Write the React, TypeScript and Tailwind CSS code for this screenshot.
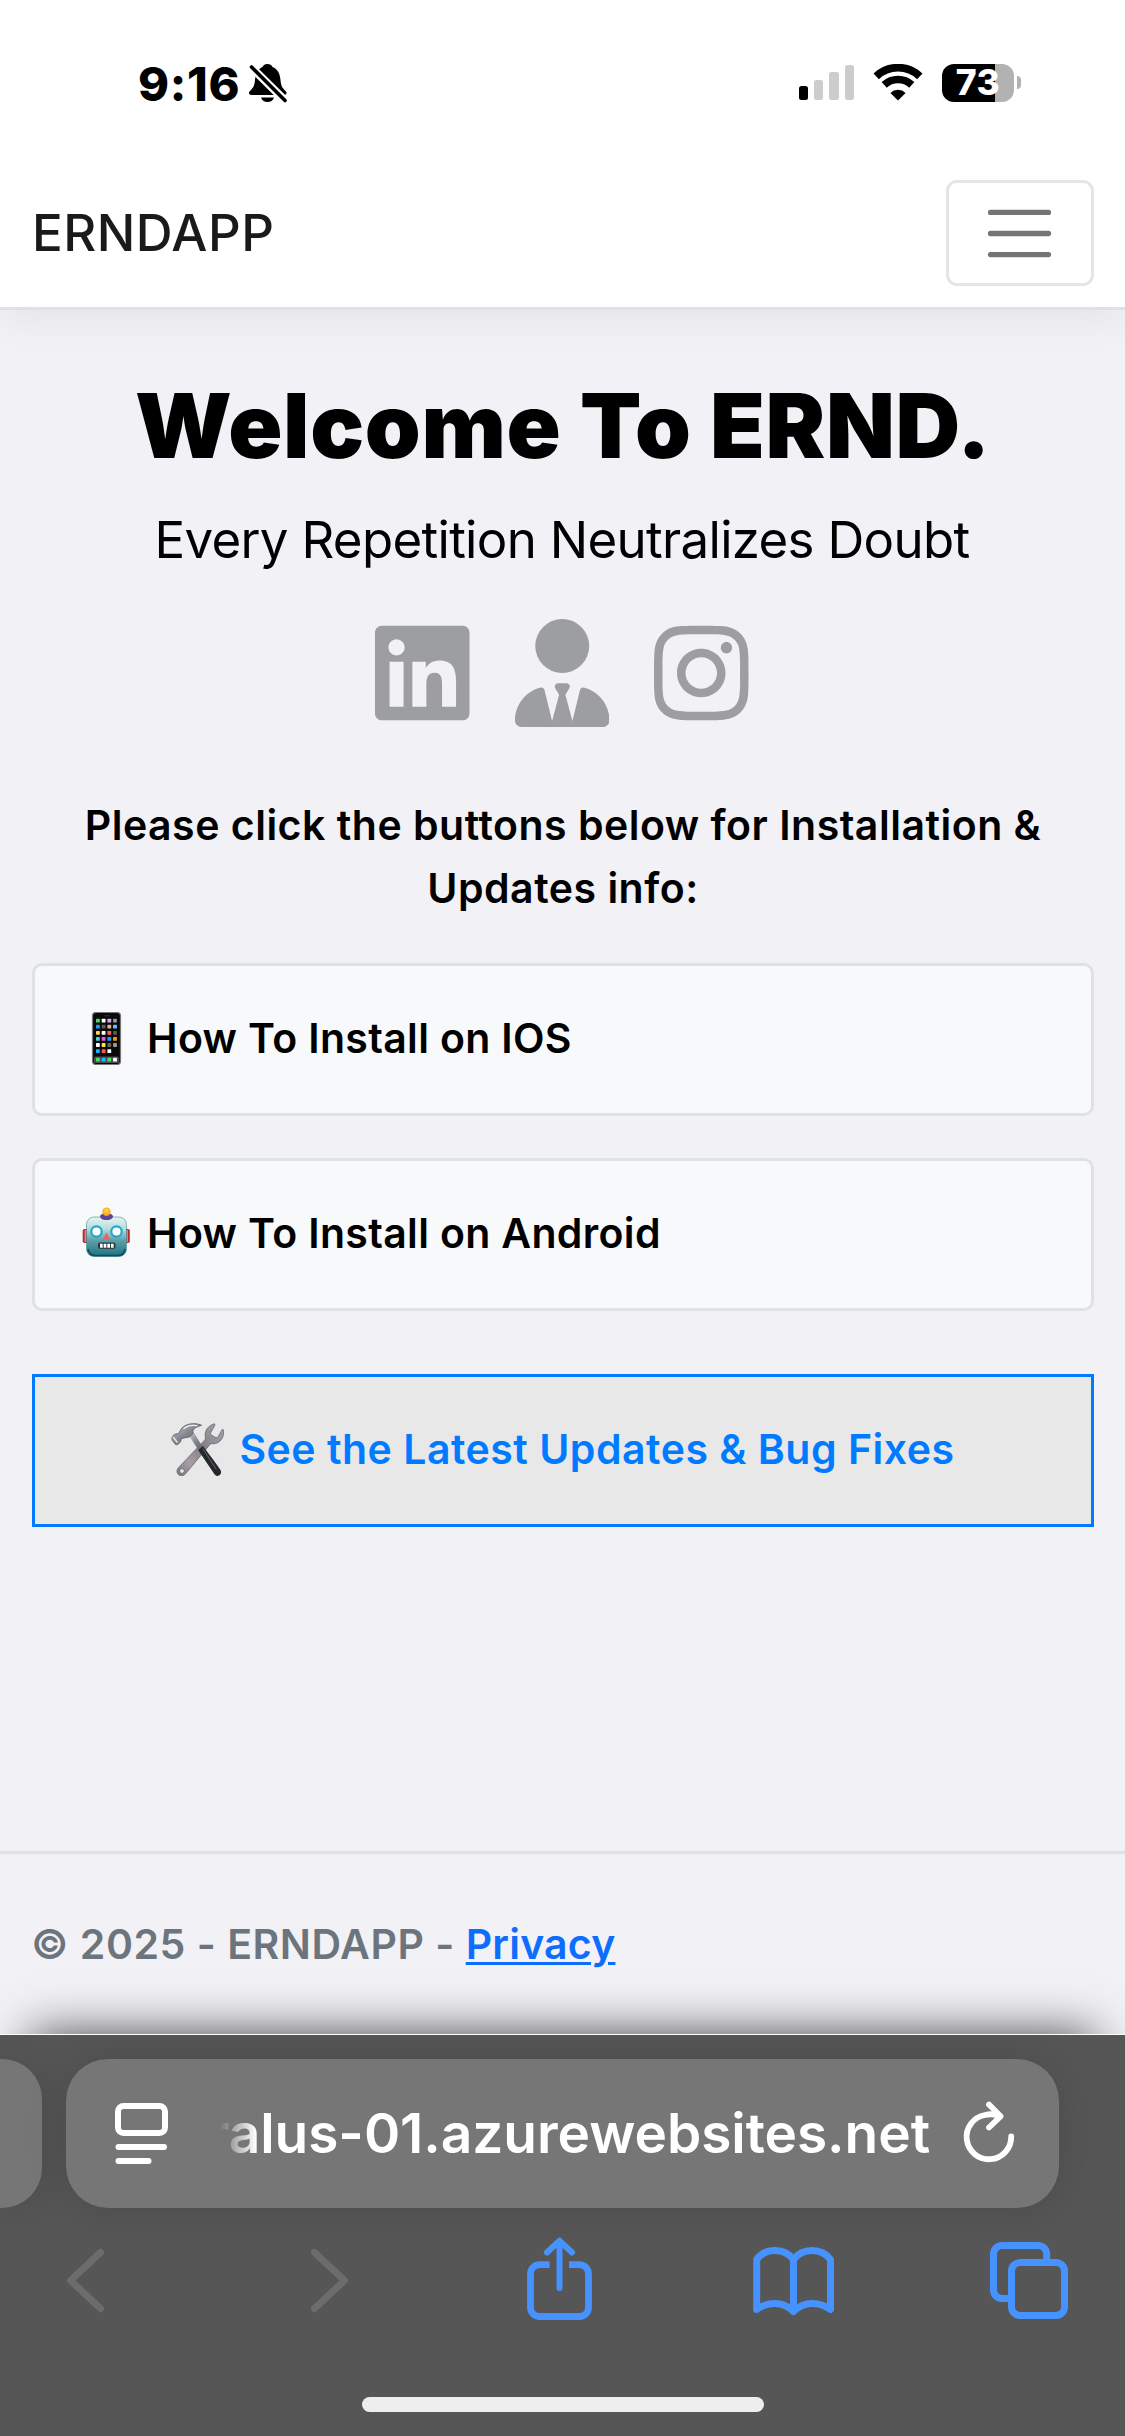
import React from "react";
import { FaInstagram, FaLinkedin, FaUserTie } from "react-icons/fa6";

function BellSlash() {
  return (
    <svg viewBox="249 63 38 40" className="h-[40px] w-[38px]">
      <path
        d="M267.5 64c2.5 0 4.200 1.300 5 3 5 2 7.500 6.500 8 13 .4 6 2 8 5 11 2 2 1 4-1.500 4H251.500c-2.500 0-3.500-2-1.500-4 3-3 4.600-5 5-11 .5-6.500 3-11 7.500-13 .8-1.700 2.500-3 5-3z"
        fill="#000"
      />
      <path d="M261 97.500h13c-.8 3-3.500 4.500-6.500 4.500s-5.700-1.500-6.500-4.500z" fill="#000" />
      <path d="M249 65l37.500 37" stroke="#fff" strokeWidth="8" />
      <path d="M251.500 67l33.500 33.500" stroke="#000" strokeWidth="3.600" strokeLinecap="round" />
    </svg>
  );
}

function Signal() {
  return (
    <div className="flex h-[35px] items-end gap-[6px]">
      <div className="h-[14px] w-[9px] rounded-[2.5px] bg-black" />
      <div className="h-[20px] w-[9px] rounded-[2.5px] bg-[#cccccc]" />
      <div className="h-[28px] w-[10px] rounded-[2.5px] bg-[#cccccc]" />
      <div className="h-[35px] w-[9px] rounded-[2.5px] bg-[#cccccc]" />
    </div>
  );
}

function Wifi() {
  return (
    <svg viewBox="0 0 50 37" className="h-[37px] w-[50px]" fill="none" stroke="#000">
      <path d="M3.200 12.300a31.800 31.800 0 0 1 43.600 0" strokeWidth="7.800" />
      <path d="M11.200 20.900a20.300 20.300 0 0 1 27.600 0" strokeWidth="7.600" />
      <path d="M25 36.600l-7.600-7.700a11 11 0 0 1 15.200 0z" fill="#000" stroke="none" />
    </svg>
  );
}

function Battery() {
  return (
    <div className="flex items-center gap-[3px]">
      <div className="flex h-[38px] w-[72px] items-center justify-center rounded-[12px] bg-[linear-gradient(to_right,#000_53px,#b2b2b2_53px)] text-[35.5px] leading-none font-extrabold tracking-[0.5px] text-white">
        73
      </div>
      <div className="h-[13px] w-[4px] rounded-r-full bg-[#b2b2b2]" />
    </div>
  );
}

function StatusBar() {
  return (
    <div className="relative z-20 flex h-[159px] items-center bg-white pt-[7px] pl-[138px] text-black">
      <div className="w-[111px] text-[47px] leading-none font-extrabold tracking-[0.7px]">9:16</div>
      <BellSlash />
      <div className="ml-[512px] flex items-center pb-px">
        <Signal />
        <div className="ml-[19px]">
          <Wifi />
        </div>
        <div className="ml-[19px]">
          <Battery />
        </div>
      </div>
    </div>
  );
}

function PhoneEmoji() {
  const rows = [
    ["#4cd964", "#ffffff", "#d7a6f0", "#9a9a9a"],
    ["#1e9bff", "#5a5a5a", "#d8b58f", "#5ac8fa"],
    ["#ffd94a", "#ffffff", "#ff5f57", "#5a5a5a"],
    ["#4bd0e0", "#e256f0", "#1e9bff", "#ff9500"],
    ["#ffffff", "#ffe14a", "#666666", "#9a9a9a"],
    ["#1eb0ff", "#ff5a4d", "#ffffff"],
  ];
  const dock = ["#4cd964", "#1eb8ff", "#4cd964", "#ffffff"];
  return (
    <svg viewBox="80 1012 53 53" className="h-[53px] w-[53px]">
      <rect x="92.500" y="1012.500" width="28" height="52" rx="3.500" fill="#0a0a0a" stroke="#77777b" strokeWidth="1.200" />
      <rect x="94" y="1056.500" width="25" height="6.500" rx="1.500" fill="#4b4b4e" />
      <rect x="104" y="1015" width="6" height="1.500" rx=".7" fill="#252528" />
      {rows.map((row, r) =>
        row.map((c, i) => (
          <rect key={`${r}-${i}`} x={96 + i * 5.7} y={1018.7 + r * 6.1} width="3.800" height="3.800" rx=".6" fill={c} />
        )),
      )}
      {dock.map((c, i) => (
        <rect key={i} x={96 + i * 5.7} y={1057.8} width="3.800" height="3.800" rx=".6" fill={c} />
      ))}
    </svg>
  );
}

function RobotEmoji() {
  return (
    <svg viewBox="80 1207 53 53" className="h-[53px] w-[53px]">
      <defs>
        <linearGradient id="face" x1="0" y1="0" x2="0" y2="1">
          <stop offset="0" stopColor="#e2f6f4" />
          <stop offset=".3" stopColor="#b5dcdc" />
          <stop offset=".6" stopColor="#5c9fa8" />
          <stop offset="1" stopColor="#1c7181" />
        </linearGradient>
        <radialGradient id="bulb" cx=".5" cy=".4" r=".6">
          <stop offset="0" stopColor="#ffe04a" />
          <stop offset="1" stopColor="#f59a12" />
        </radialGradient>
      </defs>
      <rect x="82.700" y="1229" width="6" height="14" rx="1.800" fill="#b5272f" />
      <rect x="123.800" y="1229" width="6" height="14" rx="1.800" fill="#b5272f" />
      <rect x="84.600" y="1230" width="1.500" height="12" fill="#e98488" />
      <rect x="126.400" y="1230" width="1.500" height="12" fill="#e98488" />
      <rect x="86.500" y="1217" width="40" height="39.500" rx="7.500" fill="url(#face)" stroke="#3f7f86" strokeOpacity=".55" strokeWidth="1" />
      <path d="M88 1249c1 5 3 6.500 7 6.500h23c4 0 6-1.500 7-6.500" fill="none" stroke="#0e4c5a" strokeWidth="1.400" />
      <path d="M100 1217c0-3 3-3.500 6.500-3.500s6.500.5 6.500 3.500c-1 2.500-4 3-6.500 3s-5.500-.5-6.500-3z" fill="#5f4390" />
      <circle cx="106.500" cy="1211.800" r="4.200" fill="url(#bulb)" />
      <circle cx="96.500" cy="1231.500" r="5.200" fill="#fff" stroke="#22a8d0" strokeWidth="2.200" />
      <circle cx="116.500" cy="1231.500" r="5.200" fill="#fff" stroke="#22a8d0" strokeWidth="2.200" />
      <path d="M106.500 1232.500l3.800 7.500h-7.600z" fill="#ef6168" />
      <rect x="98" y="1242.500" width="17.500" height="6.200" rx="2" fill="#2b3338" />
      <path d="M100 1245.700h13.800" stroke="#fff" strokeWidth="4" strokeDasharray="2.700 .95" />
    </svg>
  );
}

function ToolsEmoji() {
  return (
    <svg viewBox="171 1423 53 53" className="h-[53px] w-[53px]">
      <defs>
        <linearGradient id="steel" x1="0" y1="0" x2="1" y2="1">
          <stop offset="0" stopColor="#c9ccd2" />
          <stop offset=".5" stopColor="#83858d" />
          <stop offset="1" stopColor="#5d5f68" />
        </linearGradient>
        <linearGradient id="wrench" x1="1" y1="0" x2="0" y2="1">
          <stop offset="0" stopColor="#a3a8b0" />
          <stop offset=".45" stopColor="#878088" />
          <stop offset=".75" stopColor="#a99da2" />
          <stop offset="1" stopColor="#77757c" />
        </linearGradient>
      </defs>
      <path
        d="M214.500 1423.800c-6 1.500-9.800 6.500-9.300 12.200.1 1.500.5 2.700 0 3.500l-27 28.500c-2.300 2.800-1.300 7.300 3 7.700 1.800.1 3.300-.6 4.400-2l24.400-29.300c.8-.9 1.800-.6 3-.6 7 0 11.500-6.300 10.500-13.500l-1-1.300-4.200 7.400c-.8 1.200-2 1.500-3.200.8l-3.500-2c-1.100-.7-1.300-1.800-.7-3l4-7z"
        fill="url(#wrench)"
        stroke="#65676e"
        strokeWidth=".8"
      />
      <circle cx="182" cy="1471" r="2.300" fill="#ececee" stroke="#66646a" strokeWidth=".7" />
      <path d="M189 1435.500l4.500-3.500 9.500 15.500-4 3.800z" fill="url(#steel)" />
      <path d="M198.300 1450.300l4.700-4.200c6 8.200 12.500 16.500 17.500 24 1.600 2.900-.2 5.800-3.200 5.800-1.300 0-2.300-.7-3-1.800z" fill="#26272b" />
      <path d="M203 1449l13 20" stroke="#66686e" strokeWidth="1" strokeLinecap="round" />
      <path
        d="M201.500 1425.200c-6.500-2.800-15-1.800-19.300 2.600-2.200 2.300-2.400 4.700-4.200 6.300-1.500-.6-3.300 0-5 1.700-1 1.300-1.300 3-.8 4.500l3.300 4.200c1 .6 2.300.1 3.700-1.200 1.500-1.500 2-2.800 1.800-4.300 2.500-1.500 5.500-1 8.500-2.200 1.500-1 3-2.500 3.500-3.800-.6-2.200.5-4 2.500-5.300 1.600-1 4-1.600 6-2.500z"
        fill="url(#steel)"
        stroke="#55575f"
        strokeWidth=".8"
      />
      <path d="M184 1428.500c3.500-3 8.500-3.600 13-2.800" fill="none" stroke="#eef0f3" strokeWidth="1.200" strokeLinecap="round" />
      <path d="M173 1437l4.500 5.500" stroke="#eef0f3" strokeWidth="1.200" />
    </svg>
  );
}

function InstallCard({ icon, label }: { icon: React.ReactNode; label: string }) {
  return (
    <button className="flex h-[153px] w-full items-center gap-[14px] rounded-[10px] border-[3px] border-[#dee2e6] bg-[#f8f9fb] pb-[2px] pl-[45px] text-black">
      {icon}
      <span>{label}</span>
    </button>
  );
}

function Header() {
  return (
    <header className="relative z-10 flex items-center justify-between border-b-[3px] border-[#dee2e6] bg-white py-[21px] pr-[31px] pl-[32px] shadow-[0_12px_36px_rgba(0,0,0,0.05)]">
      <a className="pb-[2px] text-[51px] leading-[63px] font-medium tracking-[0.5px] text-[#1a1a1a]">ERNDAPP</a>
      <button className="flex h-[106px] w-[148px] items-center justify-center rounded-[11px] border-[3px] border-[#e5e5e5] pr-px">
        <svg viewBox="0 0 30 30" className="h-[79px] w-[79px]" stroke="#757575" strokeWidth="2" strokeLinecap="round">
          <path d="M4 7h22M4 15h22M4 23h22" />
        </svg>
      </button>
    </header>
  );
}

function AddressBar() {
  return (
    <div className="flex gap-[24px]">
      <div className="h-[149px] w-[42px] rounded-r-[40px] bg-[#767676] shadow-[0_0_40px_rgba(0,0,0,0.13)]" />
      <div className="flex h-[149px] w-[993px] items-center rounded-[42px] bg-[#767676] pl-[49px] text-white shadow-[0_0_40px_rgba(0,0,0,0.13)]">
        <svg viewBox="115 2103 53 62" className="h-[62px] w-[53px] shrink-0" fill="none" stroke="#fff" strokeWidth="6" strokeLinecap="round">
          <rect x="118" y="2106" width="47" height="27" rx="5.500" />
          <path d="M118.500 2147h45.500M118.500 2161h30" />
        </svg>
        <div className="mb-[2px] ml-[24px] flex h-[80px] w-[738px] items-center justify-end text-[55px] leading-[80px] font-semibold tracking-[-0.06px] whitespace-nowrap [mask-image:linear-gradient(to_right,transparent_28px,#000_64px)]">
          ralus-01.azurewebsites.net
        </div>
        <svg viewBox="962 2098 54 66" className="mb-[4px] ml-[32px] h-[66px] w-[54px] shrink-0" fill="none" stroke="#fff" strokeWidth="5.800" strokeLinecap="round" strokeLinejoin="round">
          <path d="M1000 2115.300C995 2113 989 2113 985 2114A22.300 22.300 0 1 0 1011.200 2135.500" />
          <path d="M989 2103.500l11.500 11.800-11.500 11.200" />
        </svg>
      </div>
    </div>
  );
}

function BrowserNav() {
  return (
    <nav className="mt-[27px] flex h-[90px] pl-[63px]" aria-label="Browser">
      <svg viewBox="63 2235 45 90" className="h-[90px] w-[45px]" fill="none" stroke="#6c6c6c" strokeWidth="7" strokeLinecap="round" strokeLinejoin="round">
        <path d="M100.500 2252.500L70.500 2280.500l30 28" />
      </svg>
      <svg viewBox="307 2235 45 90" className="ml-[199px] h-[90px] w-[45px]" fill="none" stroke="#6c6c6c" strokeWidth="7" strokeLinecap="round" strokeLinejoin="round">
        <path d="M314.500 2252.500l30 28-30 28" />
      </svg>
      <svg viewBox="523 2235 73 90" className="ml-[171px] h-[90px] w-[73px]" fill="none" stroke="#4692ff" strokeWidth="6.800" strokeLinejoin="round">
        <path d="M549.600 2264.700H539.500a9 9 0 0 0-9 9V2307.500a9 9 0 0 0 9 9H579.500a9 9 0 0 0 9-9V2273.700a9 9 0 0 0-9-9H569" />
        <path d="M559.500 2241V2288M547 2252.500l12.500-11.800 12.500 11.800" strokeWidth="6" strokeLinecap="round" />
      </svg>
      <svg viewBox="749 2235 89 90" className="ml-[153px] h-[90px] w-[89px]" fill="none" stroke="#4692ff" strokeWidth="7" strokeLinecap="round" strokeLinejoin="round">
        <path d="M793.500 2259.500C789 2253.500 782 2250.500 775 2250.500S761 2253.500 756.700 2259.500V2309.500C762 2305.500 768 2303.500 775 2303.500S788 2306 793.500 2311.500C799 2306 805.500 2303.500 812 2303.500S825 2305.500 830.500 2309.500V2259.500C826 2253.500 819 2250.500 812 2250.500S798 2253.500 793.500 2259.500V2311" />
      </svg>
      <svg viewBox="986 2235 86 90" className="ml-[148px] h-[90px] w-[86px]" fill="none" stroke="#4692ff" strokeWidth="7">
        <rect x="1011.500" y="2262.500" width="53" height="53" rx="8.500" />
        <path d="M1046.700 2259V2254a8.500 8.500 0 0 0-8.500-8.500H1002a8.500 8.500 0 0 0-8.500 8.500V2290a8.500 8.500 0 0 0 8.500 8.500H1008" />
      </svg>
    </nav>
  );
}

export default function App() {
  return (
    <div className="flex h-[2436px] w-[1125px] flex-col overflow-hidden bg-[#f2f1f6] font-['Inter','Liberation_Sans',sans-serif]">
      <StatusBar />
      <Header />
      <main className="h-[1541px] px-[32px] pr-[31px] pt-[62px] text-center text-black">
        <h1 className="text-[89.5px] leading-[108px] font-black tracking-[0.65px]">Welcome To ERND.</h1>
        <p className="mt-[28px] pr-[2px] text-[51px] leading-[63px] tracking-[-0.69px]">Every Repetition Neutralizes Doubt</p>
        <div className="mt-[48px] flex justify-center gap-[45px] pr-[2px] text-[#9d9ea2]">
          <FaLinkedin className="h-[108px] w-[94.5px]" />
          <FaUserTie className="h-[108px] w-[94.5px]" />
          <FaInstagram className="h-[108px] w-[94.5px]" />
        </div>
        <div className="mt-[67px] text-[41px] leading-[63px] font-semibold tracking-[0.51px]">
          <p>
            Please click the buttons below for Installation &amp;
            <br />
            Updates info:
          </p>
          <div className="mt-[43px] flex flex-col gap-[42px] tracking-[0.34px]">
            <InstallCard icon={<PhoneEmoji />} label="How To Install on IOS" />
            <InstallCard icon={<RobotEmoji />} label="How To Install on Android" />
          </div>
          <button className="mt-[63px] flex h-[153px] w-full items-center justify-center gap-[15px] border-[3px] border-[#007bff] bg-[#e8e8e8] pb-[2px] text-[#007bff]">
            <ToolsEmoji />
            <span>See the Latest Updates &amp; Bug Fixes</span>
          </button>
        </div>
      </main>
      <footer className="h-[183px] border-t-[3px] border-[#dee2e6] pt-[59px] pl-[31px] text-[41px] leading-[63px] font-semibold tracking-[0.53px] text-[#6c757d]">
        © 2025 - ERNDAPP -{" "}
        <a className="tracking-[0.2px] text-[#0d6efd] underline decoration-[3px] underline-offset-[3px]">Privacy</a>
      </footer>
      <div className="relative flex-1 border-t border-white bg-[#565656] pt-[24px] shadow-[0_-30px_45px_-30px_rgba(0,0,0,0.7)]">
        <AddressBar />
        <BrowserNav />
        <div className="mx-auto mt-[72px] h-[15px] w-[402px] rounded-full bg-[#eeeeee]" />
      </div>
    </div>
  );
}
